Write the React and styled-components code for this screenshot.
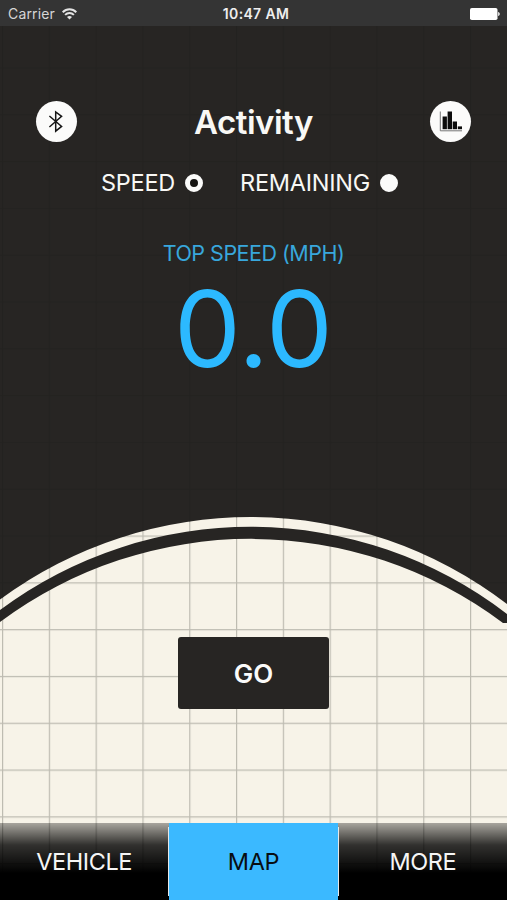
import { useState } from 'react';
import styled, { createGlobalStyle } from 'styled-components';

export default function App() {
    const [mode, setMode] = useState('speed');
    const [tab, setTab] = useState('map');

    return (
        <Screen>
            <GlobalStyle />
            <Backdrop />
            <StatusBar>
                <Carrier>Carrier <WifiIcon /></Carrier>
                <Clock>10:47 AM</Clock>
                <BatteryIcon />
            </StatusBar>
            <Header>
                <RoundButton aria-label="Bluetooth"><BluetoothIcon /></RoundButton>
                <Title>Activity</Title>
                <RoundButton aria-label="Stats"><ChartIcon /></RoundButton>
            </Header>
            <Modes>
                <Mode onClick={() => setMode('speed')}>
                    SPEED <Radio $checked={mode === 'speed'} />
                </Mode>
                <Mode onClick={() => setMode('remaining')}>
                    REMAINING <Radio $checked={mode === 'remaining'} />
                </Mode>
            </Modes>
            <Label>TOP SPEED (MPH)</Label>
            <Speed>0.0</Speed>
            <GoArea>
                <GoButton>GO</GoButton>
            </GoArea>
            <TabBar>
                <Tab $active={tab === 'vehicle'} onClick={() => setTab('vehicle')}>VEHICLE</Tab>
                <Divider />
                <Tab $active={tab === 'map'} onClick={() => setTab('map')}>MAP</Tab>
                <Divider />
                <Tab $active={tab === 'more'} onClick={() => setTab('more')}>MORE</Tab>
            </TabBar>
        </Screen>
    );
}

function Backdrop() {
    return (
        <BackdropSvg viewBox="0 0 507 900">
            <defs>
                <pattern id="grid" x="2" y="20.7" width="46.8" height="46.8" patternUnits="userSpaceOnUse">
                    <path d="M0.6 0V46.8M0 0.6H46.8" stroke="#77776e" strokeOpacity="0.45" strokeWidth="1.2" />
                </pattern>
                <pattern id="darkGrid" x="2" y="20.7" width="46.8" height="46.8" patternUnits="userSpaceOnUse">
                    <path d="M0.6 0V46.8M0 0.6H46.8" stroke="#1f1e1d" strokeOpacity="0.45" strokeWidth="1.2" />
                </pattern>
            </defs>
            <rect width="507" height="900" fill="#f7f3e8" />
            <rect width="507" height="900" fill="url(#grid)" />
            <path d="M0 0H507V604A422 422 0 0 0 0 599.5Z" fill="#272523" />
            <path d="M0 0H507V604A422 422 0 0 0 0 599.5Z" fill="url(#darkGrid)" />
            <path d="M0 610A420 420 0 0 1 507 614V623H503A420 420 0 0 0 0 622Z" fill="#272523" />
        </BackdropSvg>
    );
}

function WifiIcon() {
    return (
        <svg width="15" height="12" viewBox="0 0 15 12" fill="none" stroke="#e4e4e4" strokeWidth="2">
            <path d="M0.7 4.3C4.6 0.3 10.4 0.3 14.3 4.3" />
            <path d="M3.1 6.9C5.6 4.4 9.4 4.4 11.9 6.9" />
            <path d="M7.5 11.4L5 8.9C6.4 7.6 8.6 7.6 10 8.9Z" fill="#e4e4e4" stroke="none" />
        </svg>
    );
}

function BatteryIcon() {
    return (
        <svg width="30" height="12" viewBox="0 0 30 12" fill="#ffffff">
            <rect width="27.5" height="12" rx="1.8" />
            <path d="M28.2 4C30.2 4.6 30.2 7.4 28.2 8Z" />
        </svg>
    );
}

function BluetoothIcon() {
    return (
        <svg width="17" height="23" viewBox="0 0 17 23" fill="none" stroke="#161616" strokeWidth="1.5">
            <path d="M1.4 6L13.6 16.4L7.7 21.2V1.9L13.6 6.4L1.4 17" />
        </svg>
    );
}

function ChartIcon() {
    return (
        <svg width="24" height="21" viewBox="0 0 24 21" fill="#0c0c0c">
            <path d="M1.3 0.5V19.8H23" fill="none" stroke="#777777" strokeWidth="1" />
            <rect x="3.6" y="5.5" width="4.3" height="12.7" />
            <rect x="8.6" y="0.5" width="4.4" height="17.7" />
            <rect x="13.7" y="10.5" width="4.3" height="7.7" />
            <rect x="18.8" y="15.4" width="4.2" height="2.8" />
        </svg>
    );
}

const GlobalStyle = createGlobalStyle`
    body {
        margin: 0;
        background: #272523;
    }
    button {
        padding: 0;
        border: none;
        background: none;
        font-family: inherit;
        cursor: pointer;
    }
`;

const Screen = styled.div`
    width: 507px;
    height: 900px;
    display: flex;
    flex-direction: column;
    position: relative;
    isolation: isolate;
    overflow: hidden;
    font-family: Inter, 'Liberation Sans', sans-serif;
    color: #f8f8f5;
`;

const BackdropSvg = styled.svg`
    width: 507px;
    height: 900px;
    position: absolute;
    inset: 0;
    z-index: -1;
`;

const StatusBar = styled.div`
    height: 26px;
    display: grid;
    grid-template-columns: 1fr auto 1fr;
    align-items: center;
    padding: 1px 7px 0 8px;
    box-sizing: border-box;
    background: #343434;
    font-size: 14px;

    > :last-child {
        justify-self: end;
    }
`;

const Carrier = styled.div`
    display: flex;
    align-items: center;
    gap: 7px;
    color: #d6d6d6;
    letter-spacing: 0.15px;
`;

const Clock = styled.div`
    padding-left: 4px;
    font-weight: 600;
    letter-spacing: 0.35px;
    color: #eeeeee;
`;

const Header = styled.header`
    height: 41px;
    display: flex;
    justify-content: space-between;
    align-items: center;
    margin-top: 75px;
    padding: 0 36px;
`;

const RoundButton = styled.button`
    width: 41px;
    height: 41px;
    display: flex;
    justify-content: center;
    align-items: center;
    border-radius: 50%;
    background: #fbfbfa;
`;

const Title = styled.h1`
    margin: 0;
    font-size: 33px;
    line-height: 42px;
    font-weight: 600;
    letter-spacing: -0.5px;
`;

const Modes = styled.div`
    height: 28px;
    display: flex;
    gap: 37px;
    margin: 27px 0 0 101px;
`;

const Mode = styled.button`
    display: flex;
    align-items: center;
    gap: 10px;
    color: inherit;
    font-size: 23.5px;
    line-height: 28px;
    letter-spacing: -0.25px;
`;

const Radio = styled.span`
    width: 18px;
    height: 18px;
    box-sizing: border-box;
    border-radius: 50%;
    border: ${props => props.$checked ? '5.5px' : '9px'} solid #fbfbfa;
    background: #151412;
`;

const Label = styled.div`
    margin-top: 43px;
    font-size: 21.5px;
    line-height: 26px;
    letter-spacing: -0.5px;
    text-align: center;
    color: #38a7dc;
`;

const Speed = styled.div`
    margin-top: 11px;
    height: 106px;
    font-size: 106px;
    line-height: 104px;
    text-align: center;
    color: #2cb9ff;
`;

const GoArea = styled.div`
    flex: 1;
    display: flex;
    justify-content: center;
    align-items: flex-end;
    padding-bottom: 114px;
`;

const GoButton = styled.button`
    width: 151px;
    height: 72px;
    border-radius: 3px;
    background: #272523;
    color: #fbfbfa;
    font-size: 26px;
    font-weight: 600;
`;

const TabBar = styled.nav`
    height: 77px;
    display: flex;
    background: linear-gradient(rgba(0, 0, 0, 0.32), rgba(0, 0, 0, 0.8) 22px, #000000 50px);
`;

const Tab = styled.button`
    flex: 1;
    color: ${props => props.$active ? '#080d12' : '#f5f5f5'};
    background: ${props => props.$active ? '#3bb9ff' : 'none'};
    font-size: 23.5px;
    letter-spacing: -0.4px;
`;

const Divider = styled.div`
    width: 1px;
    margin: 4px 0;
    background: #e8e8e8;
`;
